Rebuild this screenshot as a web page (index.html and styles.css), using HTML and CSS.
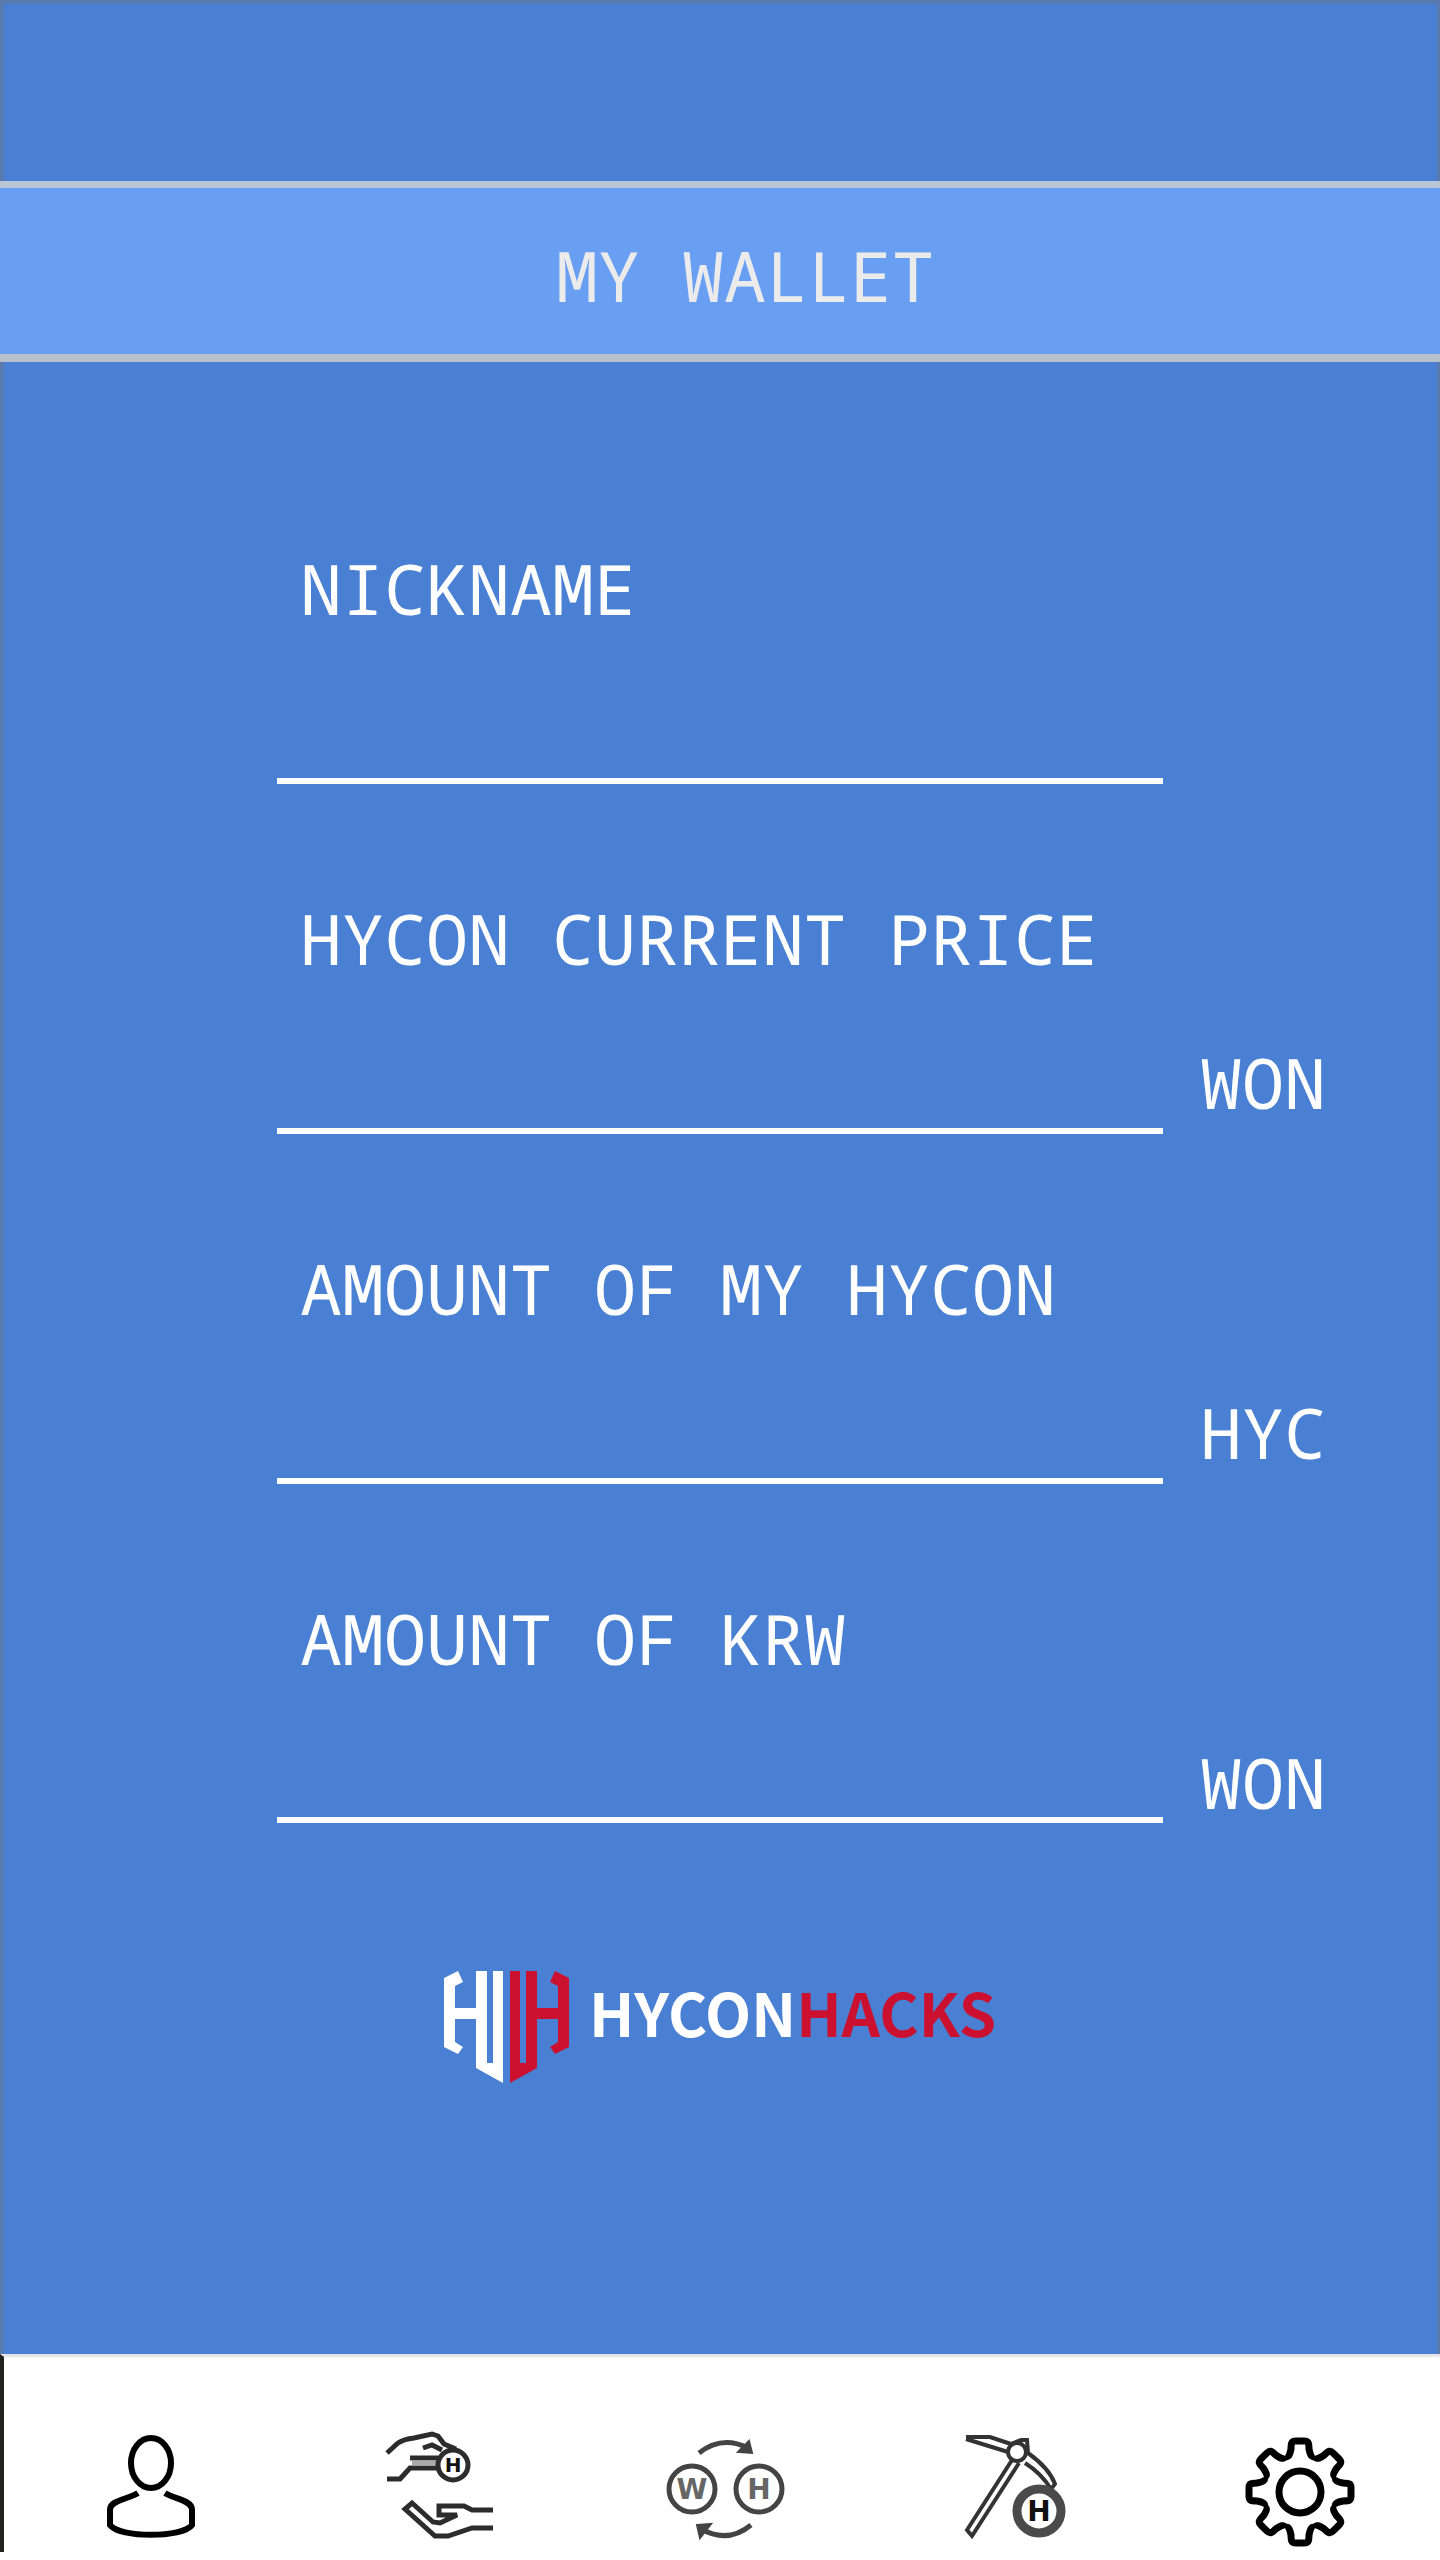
FILE: index.html
```html
<!DOCTYPE html>
<html lang="en">
<head>
<meta charset="utf-8">
<title>My Wallet</title>
<link rel="stylesheet" href="styles.css">
</head>
<body>
<main class="wallet">
  <header class="banner"><h1 class="banner-title">MY WALLET</h1></header>
  <form class="fields">
    <div class="field">
      <label class="label" for="nickname">NICKNAME</label>
      <input class="input" id="nickname" type="text">
    </div>
    <div class="field">
      <label class="label" for="price">HYCON CURRENT PRICE</label>
      <input class="input" id="price" type="text">
      <span class="unit">WON</span>
    </div>
    <div class="field">
      <label class="label" for="hycon">AMOUNT OF MY HYCON</label>
      <input class="input" id="hycon" type="text">
      <span class="unit">HYC</span>
    </div>
    <div class="field field-total">
      <label class="label" for="krw">AMOUNT OF KRW</label>
      <input class="input" id="krw" type="text">
      <span class="unit">WON</span>
    </div>
  </form>
  <div class="brand">
    <svg class="brand-mark" viewBox="0 0 125 112" aria-hidden="true">
      <defs><path id="half" d="M32 0H43V92H49V0H59V112L32 97V48H11V71L19 76L14 83L0 76V7L14 0L19 11L11 15V37H32Z"/></defs>
      <use href="#half" fill="#fff"/>
      <use href="#half" fill="#cc1030" transform="translate(125) scale(-1 1)"/>
    </svg>
    <span class="brand-name">HYCON<span class="brand-accent">HACKS</span></span>
  </div>
</main>
<nav class="tabs">
  <a class="tab" href="#profile" aria-label="Profile">
    <svg class="icon" viewBox="0 0 120 120" stroke="#000" stroke-width="6">
      <ellipse cx="60" cy="36" rx="20" ry="25"/>
      <path d="M47 66C38 72 20 73 19 82V98C28 111 92 111 101 98V82C100 73 83 72 74 66"/>
    </svg>
  </a>
  <a class="tab" href="#send" aria-label="Send">
    <svg class="icon" viewBox="0 0 120 120" stroke="#2c2c2c" stroke-width="5">
      <path d="M9 26L20 16Q26 12 36 11L54 7L60 9L66 17L78 22M45 21L54 18L64 23M32 31H60M9 52H22L32 41H60"/>
      <path d="M34 36H60" stroke="#aaa"/>
      <circle cx="75" cy="38" r="15"/>
      <path d="M115 83H94L86 79H61V88H79L62 96L55 95L34 76L27 82L57 109H70L94 101H115"/>
      <text class="coin coin-small" x="75" y="45">H</text>
    </svg>
  </a>
  <a class="tab" href="#exchange" aria-label="Exchange">
    <svg class="icon" viewBox="0 0 120 120" stroke="#444" stroke-width="5">
      <circle cx="26" cy="62" r="23"/><circle cx="93" cy="62" r="23"/>
      <path d="M33 26Q56 8 82 21M85 98Q62 117 35 102"/>
      <path d="M72 25L83 14L86 26ZM31 98L45 97L34 111Z" fill="#444" stroke-width="2"/>
      <text class="coin coin-light" x="26" y="72">W</text><text class="coin coin-light" x="93" y="72">H</text>
    </svg>
  </a>
  <a class="tab" href="#mining" aria-label="Mining">
    <svg class="icon" viewBox="0 0 120 120" stroke="#333" stroke-width="4">
      <path d="M59 33L14 103L19 109L66 36M13 10H37L58 17L68 13H74L75 26Q96 41 102 57L98 62Q88 46 72 36M13 12L55 25"/>
      <circle cx="64" cy="25" r="9"/>
      <circle cx="86" cy="84" r="22" stroke="#4a4a4a" stroke-width="9"/>
      <text class="coin" x="86" y="94">H</text>
    </svg>
  </a>
  <a class="tab" href="#settings" aria-label="Settings">
    <svg class="icon" viewBox="0 0 120 120" stroke="#000" stroke-width="7">
      <defs><path id="tooth" d="M-15 -36C-11 -34 -10 -38 -9 -43C-9 -50 -8 -51 -4 -51H4C8 -51 9 -50 9 -43C10 -38 11 -34 15 -36"/></defs>
      <g transform="translate(60 65)">
        <circle r="21"/>
        <use href="#tooth"/><use href="#tooth" transform="rotate(45)"/><use href="#tooth" transform="rotate(90)"/><use href="#tooth" transform="rotate(135)"/><use href="#tooth" transform="rotate(180)"/><use href="#tooth" transform="rotate(225)"/><use href="#tooth" transform="rotate(270)"/><use href="#tooth" transform="rotate(315)"/>
      </g>
    </svg>
  </a>
</nav>
</body>
</html>
```
FILE: styles.css
```css
* { box-sizing: border-box; }
body {
  margin: 0;
  min-height: 100vh;
  display: flex;
  flex-direction: column;
  background: #fff;
  font: 70px/74px "Droid Sans Mono", "Noto Sans Mono", "Liberation Mono", monospace;
  color: #fff;
}
.wallet {
  flex: 1;
  padding-top: 177px;
  border-top: 4px solid #597aae;
  background: linear-gradient(90deg, #597aae 4px, #4a80d3 4px calc(100% - 3px), #597aae calc(100% - 3px));
}
.banner {
  height: 181px;
  padding: 50px 0 0 50px;
  border-top: 7px solid #bac6d6;
  border-bottom: 8px solid #b8c0cc;
  background: #699ff2;
  text-align: center;
}
.banner-title { margin: 0; font: inherit; color: #ebebeb; }
.fields {
  display: grid;
  gap: 117px;
  padding-top: 189px;
}
.field {
  display: grid;
  grid-template-columns: 277fr 886fr 277fr;
  grid-template-rows: 80px 153px;
}
.field-total { grid-template-rows: 80px 142px; }
.label { grid-area: 1 / 2; padding-left: 23px; white-space: nowrap; }
.input {
  grid-area: 2 / 2;
  width: 100%;
  min-width: 0;
  padding: 0 23px;
  border: 0;
  border-bottom: 6px solid #fff;
  background: none;
  color: inherit;
  font: inherit;
  outline: 0;
}
.unit { grid-area: 2 / 3; padding: 64px 0 0 37px; }
.brand {
  display: flex;
  justify-content: center;
  gap: 20px;
  padding-top: 148px;
}
.brand-mark { width: 125px; height: 112px; }
.brand-name { font: bold 60px/80px "Noto Sans CJK KR", sans-serif; }
.brand-accent { color: #cc1030; }
.tabs {
  display: flex;
  justify-content: space-between;
  margin-bottom: 8px;
  padding: 70px 80px 5px 87px;
  border-top: 3px solid #e6e6e6;
  border-left: 4px solid #23211d;
}
.icon { display: block; width: 120px; height: 120px; fill: none; overflow: visible; }
.coin {
  font: bold 28px "DejaVu Sans", sans-serif;
  text-anchor: middle;
  fill: #111;
  stroke: none;
}
.coin-small { font-size: 20px; }
.coin-light { fill: #666; }
```
